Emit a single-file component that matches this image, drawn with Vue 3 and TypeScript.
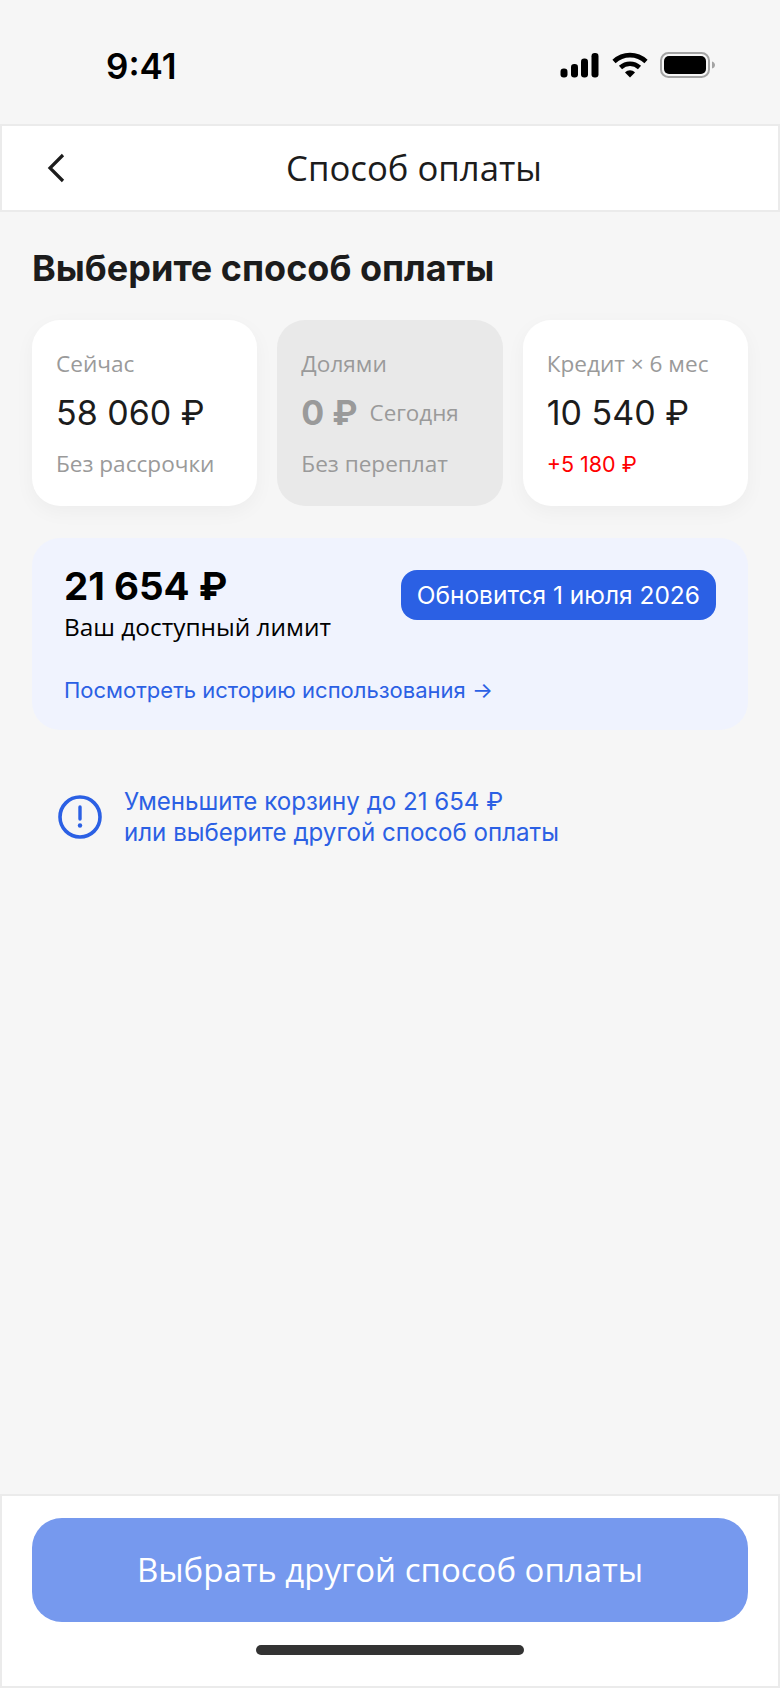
<template>
  <div class="screen">
    <div class="status">
      <span class="time">9:41</span>
      <div class="status-icons">
        <svg width="40" height="25" viewBox="0 0 40 25" fill="#000">
          <rect x="0.5" y="15.5" width="7" height="9" rx="3.2" />
          <rect x="11" y="11" width="7" height="13.5" rx="3.2" />
          <rect x="21" y="5.5" width="7" height="19" rx="3.2" />
          <rect x="31.5" y="0" width="7" height="24.5" rx="3.2" />
        </svg>
        <svg width="36" height="26" viewBox="0 0 36 26" fill="none" stroke="#000" stroke-width="4.6">
          <path d="M2 9.5C11 1 25 1 34 9.5" />
          <path d="M8.5 15.5C14 10.5 22 10.5 27.5 15.5" />
          <path d="M13 20.5L18 25.5L23 20.5C20 17.5 16 17.5 13 20.5Z" fill="#000" stroke="none" />
        </svg>
        <svg width="56" height="26" viewBox="0 0 56 26">
          <rect x="1" y="1" width="48" height="24" rx="7.5" fill="none" stroke="#a3a3a3" stroke-width="2" />
          <rect x="4" y="4" width="42" height="18" rx="5" fill="#000" />
          <path d="M52 9.5C54 10 55 11.5 55 13S54 16 52 16.5Z" fill="#a3a3a3" />
        </svg>
      </div>
    </div>

    <header class="nav">
      <svg class="back" width="24" height="32" viewBox="0 0 24 32" fill="none" stroke="#1c1c1c" stroke-width="3.2">
        <path d="M18 3L5 16L18 29" />
      </svg>
      <h1>Способ оплаты</h1>
    </header>

    <main class="content">
      <h2>Выберите способ оплаты</h2>

      <div class="cards">
        <div v-for="card in cards" :key="card.label" class="card" :class="{ off: card.off }">
          <div class="card-label">{{ card.label }}</div>
          <div class="card-price">
            <span>{{ card.price }}</span>
            <small v-if="card.note">{{ card.note }}</small>
          </div>
          <div class="card-sub" :class="{ red: card.red }">{{ card.sub }}</div>
        </div>
      </div>

      <section class="limit">
        <div class="limit-top">
          <div>
            <div class="limit-sum">21 654 ₽</div>
            <div class="limit-text">Ваш доступный лимит</div>
          </div>
          <span class="badge">Обновится 1 июля 2026</span>
        </div>
        <a class="limit-link">Посмотреть историю использования →</a>
      </section>

      <div class="warn">
        <svg width="46" height="46" viewBox="0 0 46 46" fill="none">
          <circle cx="23" cy="23" r="20" stroke="#2b60e4" stroke-width="3.6" />
          <path d="M23 13V25" stroke="#2b60e4" stroke-width="3.4" stroke-linecap="round" />
          <circle cx="23" cy="31.5" r="2.2" fill="#2b60e4" />
        </svg>
        <p>Уменьшите корзину до 21 654 ₽<br />или выберите другой способ оплаты</p>
      </div>
    </main>

    <footer class="footer">
      <button class="cta">Выбрать другой способ оплаты</button>
      <div class="home"></div>
    </footer>
  </div>
</template>

<script setup lang="ts">
interface PayCard {
  label: string
  price: string
  sub: string
  note?: string
  off?: boolean
  red?: boolean
}

const cards: PayCard[] = [
  { label: 'Сейчас', price: '58 060 ₽', sub: 'Без рассрочки' },
  { label: 'Долями', price: '0 ₽', note: 'Сегодня', sub: 'Без переплат', off: true },
  { label: 'Кредит × 6 мес', price: '10 540 ₽', sub: '+5 180 ₽', red: true },
]
</script>

<style>
html, body { margin: 0; background: #f6f6f6; }
</style>

<style scoped>
.screen {
  width: 780px; height: 1688px; background: #f6f6f6;
  display: flex; flex-direction: column;
  font-family: "Open Sans", "Noto Sans", sans-serif;
  color: #1c1c1c; box-sizing: border-box;
}

.status {
  height: 124px; flex: none; box-sizing: border-box;
  display: flex; justify-content: space-between; align-items: flex-start;
  padding: 46px 64px 0 106px;
}
.time { font: 600 35px/40px Inter, sans-serif; color: #000; }
.status-icons { display: flex; align-items: center; gap: 12px; margin-top: 6px; }

.nav {
  height: 88px; flex: none; box-sizing: border-box;
  background: #fff; border: 2px solid #ebebeb; padding-left: 48px;
  display: flex; align-items: center; justify-content: center; position: relative;
}
.back { position: absolute; left: 43px; top: 26px; }
.nav h1 { margin: 0; font-size: 34.7px; font-weight: 400; line-height: 44px; }

.content { flex: 1; padding: 32px 32px 0; }
h2 { margin: 0; font: 700 36px/48px Inter, sans-serif; color: #1c1c1c; }

.cards { display: grid; grid-template-columns: repeat(3, 1fr); gap: 20px; margin-top: 28px; }
.card {
  height: 186px; box-sizing: border-box; padding: 28px 20px 0 24px;
  background: #fff; border-radius: 28px;
  box-shadow: 0 6px 20px rgba(0, 0, 0, 0.04);
}
.card.off { background: #e9e9e9; box-shadow: none; }
.card-label { font-size: 22.6px; line-height: 32px; color: #9a9a9a; white-space: nowrap; }
.card-price {
  margin-top: 11px; height: 44px; display: flex; align-items: center; gap: 12px;
  font: 400 34px/44px Inter, sans-serif; white-space: nowrap;
}
.off .card-price { font-weight: 700; color: #9a9a9a; }
.card-price small { font: 400 22.4px/32px "Open Sans", sans-serif; color: #9a9a9a; }
.card-sub { margin-top: 13px; font-size: 22.6px; line-height: 32px; color: #9a9a9a; }
.card-sub.red { color: #ff0000; font: 400 21.5px/32px Inter, sans-serif; }

.limit {
  margin-top: 32px; height: 192px; box-sizing: border-box; padding: 23px 32px 0;
  background: #f0f3fe; border-radius: 28px;
}
.limit-top { display: flex; justify-content: space-between; align-items: flex-start; }
.limit-sum { font: 700 38.5px/50px Inter, sans-serif; color: #000; }
.limit-text { font-size: 24.4px; line-height: 32px; color: #000; }
.badge {
  margin-top: 9px; height: 50px; padding: 0 16px; box-sizing: border-box;
  display: flex; align-items: center;
  background: #2b60e4; color: #fff; border-radius: 16px;
  font: 400 24.5px/32px Inter, sans-serif;
}
.limit-link {
  display: block; margin-top: 31px;
  font: 400 22px/32px Inter, sans-serif; color: #2b60e4;
}

.warn { display: flex; align-items: center; gap: 21px; margin-top: 56px; padding-left: 25px; }
.warn p { margin: 0; font: 400 24.1px/31px Inter, sans-serif; color: #2b60e4; }

.footer {
  height: 194px; flex: none; box-sizing: border-box; position: relative;
  background: #fff; border: 2px solid #ebebeb; padding: 22px 30px 0;
}
.cta {
  display: block; width: 100%; height: 104px; border: 0; border-radius: 30px;
  background: #7699ee; color: #fff;
  font: 500 33px/44px "Open Sans", sans-serif;
}
.home {
  width: 268px; height: 10px; border-radius: 5px; background: #333;
  margin: 23px auto 0;
}
</style>
